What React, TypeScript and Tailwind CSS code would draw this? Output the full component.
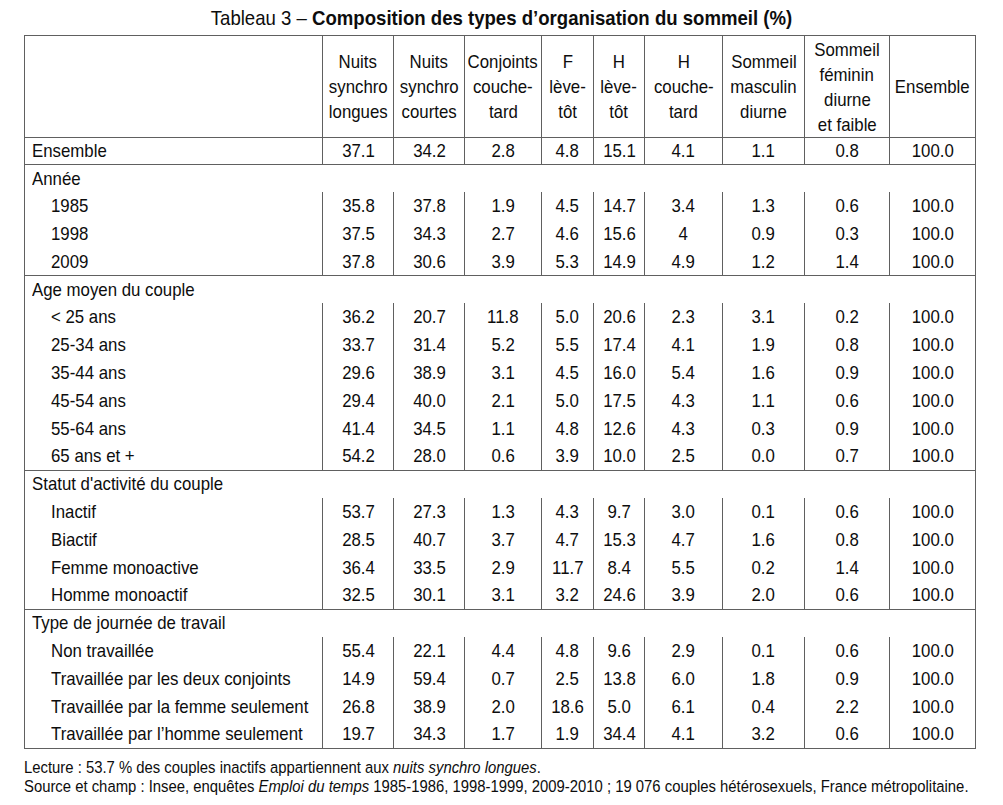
import type { ReactNode } from "react";

const font = "font-['Liberation_Sans','Arial',sans-serif]";

type Row = { label: string; values: string[] };
type Section = { title: string; rows: Row[] };

const headers: string[][] = [
  ["Nuits", "synchro", "longues"],
  ["Nuits", "synchro", "courtes"],
  ["Conjoints", "couche-", "tard"],
  ["F", "lève-", "tôt"],
  ["H", "lève-", "tôt"],
  ["H", "couche-", "tard"],
  ["Sommeil", "masculin", "diurne"],
  ["Sommeil", "féminin", "diurne", "et faible"],
  ["Ensemble"],
];

const widths = [298, 71, 71, 77, 52, 51, 78, 82, 85, 86];

const total = ["37.1", "34.2", "2.8", "4.8", "15.1", "4.1", "1.1", "0.8", "100.0"];

const sections: Section[] = [
  {
    title: "Année",
    rows: [
      { label: "1985", values: ["35.8", "37.8", "1.9", "4.5", "14.7", "3.4", "1.3", "0.6", "100.0"] },
      { label: "1998", values: ["37.5", "34.3", "2.7", "4.6", "15.6", "4", "0.9", "0.3", "100.0"] },
      { label: "2009", values: ["37.8", "30.6", "3.9", "5.3", "14.9", "4.9", "1.2", "1.4", "100.0"] },
    ],
  },
  {
    title: "Age moyen du couple",
    rows: [
      { label: "< 25 ans", values: ["36.2", "20.7", "11.8", "5.0", "20.6", "2.3", "3.1", "0.2", "100.0"] },
      { label: "25-34 ans", values: ["33.7", "31.4", "5.2", "5.5", "17.4", "4.1", "1.9", "0.8", "100.0"] },
      { label: "35-44 ans", values: ["29.6", "38.9", "3.1", "4.5", "16.0", "5.4", "1.6", "0.9", "100.0"] },
      { label: "45-54 ans", values: ["29.4", "40.0", "2.1", "5.0", "17.5", "4.3", "1.1", "0.6", "100.0"] },
      { label: "55-64 ans", values: ["41.4", "34.5", "1.1", "4.8", "12.6", "4.3", "0.3", "0.9", "100.0"] },
      { label: "65 ans et +", values: ["54.2", "28.0", "0.6", "3.9", "10.0", "2.5", "0.0", "0.7", "100.0"] },
    ],
  },
  {
    title: "Statut d'activité du couple",
    rows: [
      { label: "Inactif", values: ["53.7", "27.3", "1.3", "4.3", "9.7", "3.0", "0.1", "0.6", "100.0"] },
      { label: "Biactif", values: ["28.5", "40.7", "3.7", "4.7", "15.3", "4.7", "1.6", "0.8", "100.0"] },
      { label: "Femme monoactive", values: ["36.4", "33.5", "2.9", "11.7", "8.4", "5.5", "0.2", "1.4", "100.0"] },
      { label: "Homme monoactif", values: ["32.5", "30.1", "3.1", "3.2", "24.6", "3.9", "2.0", "0.6", "100.0"] },
    ],
  },
  {
    title: "Type de journée de travail",
    rows: [
      { label: "Non travaillée", values: ["55.4", "22.1", "4.4", "4.8", "9.6", "2.9", "0.1", "0.6", "100.0"] },
      { label: "Travaillée par les deux conjoints", values: ["14.9", "59.4", "0.7", "2.5", "13.8", "6.0", "1.8", "0.9", "100.0"] },
      { label: "Travaillée par la femme seulement", values: ["26.8", "38.9", "2.0", "18.6", "5.0", "6.1", "0.4", "2.2", "100.0"] },
      { label: "Travaillée par l’homme seulement", values: ["19.7", "34.3", "1.7", "1.9", "34.4", "4.1", "3.2", "0.6", "100.0"] },
    ],
  },
];

const line = "border-[#606060]";

// the source uses a narrow face (Arial Narrow); squeeze Liberation Sans to match
function Narrow({ children, left }: { children: ReactNode; left?: boolean }) {
  return (
    <span className={`inline-block whitespace-nowrap scale-x-[0.885] ${left ? "origin-left" : "origin-center"}`}>
      {children}
    </span>
  );
}

function NumCells({ values }: { values: string[] }) {
  return (
    <>
      {values.map((v, i) => (
        <td key={i} className={`border-l ${line} p-0`}>
          <div className="flex justify-center">
            <Narrow>{v}</Narrow>
          </div>
        </td>
      ))}
    </>
  );
}

function SectionRows({ section }: { section: Section }) {
  const last = section.rows.length - 1;
  return (
    <>
      <tr className="h-[27.8px]">
        <td colSpan={10} className="pl-[7px]">
          <Narrow left>{section.title}</Narrow>
        </td>
      </tr>
      {section.rows.map((r, i) => (
        <tr key={r.label} className={`h-[27.8px] ${i === last ? `border-b ${line}` : ""}`}>
          <td className="pl-[26px]">
            <Narrow left>{r.label}</Narrow>
          </td>
          <NumCells values={r.values} />
        </tr>
      ))}
    </>
  );
}

export default function App() {
  return (
    <div className={`min-h-screen overflow-hidden bg-white text-[#0d0d0d] ${font}`}>
      <h1 className="pt-[5px] text-center text-[21px] leading-[26px] font-normal">
        <Narrow>
          Tableau 3 – <span className="font-bold">Composition des types d’organisation du sommeil (%)</span>
        </Narrow>
      </h1>
      <table className={`ml-[24px] mt-[4px] table-fixed border-collapse border ${line} text-[19px] leading-[22px]`} style={{ width: 951 }}>
        <colgroup>
          {widths.map((w, i) => (
            <col key={i} style={{ width: w }} />
          ))}
        </colgroup>
        <thead>
          <tr className="h-[102px]">
            <th className={`border-b ${line}`}></th>
            {headers.map((h, i) => (
              <th key={i} className={`border-l border-b ${line} p-0 font-normal leading-[25px]`}>
                {h.map((t, j) => (
                  <div key={j} className="flex justify-center">
                    <Narrow>{t}</Narrow>
                  </div>
                ))}
              </th>
            ))}
          </tr>
        </thead>
        <tbody>
          <tr className={`h-[27px] border-b ${line}`}>
            <td className="pl-[7px]">
              <Narrow left>Ensemble</Narrow>
            </td>
            <NumCells values={total} />
          </tr>
          {sections.map((s) => (
            <SectionRows key={s.title} section={s} />
          ))}
        </tbody>
      </table>
      <div className="ml-[24px] mt-[9px] text-[16.8px] leading-[19px]">
        <div>
          <Narrow left>
            Lecture : 53.7 % des couples inactifs appartiennent aux <i>nuits synchro longues</i>.
          </Narrow>
        </div>
        <div>
          <Narrow left>
            Source et champ : Insee, enquêtes <i>Emploi du temps</i> 1985-1986, 1998-1999, 2009-2010 ; 19 076 couples
            hétérosexuels, France métropolitaine.
          </Narrow>
        </div>
      </div>
    </div>
  );
}
